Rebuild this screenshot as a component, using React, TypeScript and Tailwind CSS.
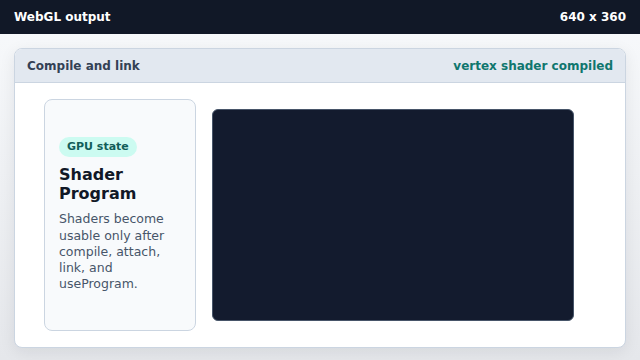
export default function App() {
  return (
    <div className="w-[640px] h-[360px] flex flex-col overflow-hidden bg-gradient-to-b from-[#f8fafc] to-[#e5e7eb] font-['DejaVu_Sans',sans-serif]">
      <div className="h-[34px] shrink-0 bg-[#111827] text-white flex items-center justify-between px-[14px] text-[12px] font-bold">
        <span>WebGL output</span>
        <span>640 x 360</span>
      </div>
      <div className="mx-[14px] mt-[14px] h-[300px] bg-white border border-[#cbd5e1] rounded-[8px] overflow-hidden flex flex-col shadow-[0_4px_16px_rgba(15,23,42,0.08)]">
        <div className="h-[34px] shrink-0 bg-[#e2e8f0] border-b border-[#cbd5e1] flex items-center justify-between px-[12px] text-[12px] font-bold">
          <span className="text-[#334155]">Compile and link</span>
          <span className="text-[#0f766e]">vertex shader compiled</span>
        </div>
        <div className="flex-1 flex items-center pl-[29px] gap-[16px]">
          <div className="w-[152px] h-[232px] bg-[#f8fafc] border border-[#cbd5e1] rounded-[8px] flex flex-col justify-center px-[14px]">
            <span className="self-start bg-[#ccfbf1] text-[#115e59] text-[11px] font-bold rounded-full px-[8px] py-[3px] leading-[14px]">
              GPU state
            </span>
            <h2 className="mt-[8px] text-[16px] leading-[19px] font-bold text-[#111827]">Shader Program</h2>
            <p className="mt-[8px] text-[12.5px] leading-[16.25px] text-[#475569]">
              Shaders become usable only after compile, attach, link, and useProgram.
            </p>
          </div>
          <div className="w-[362px] h-[212px] bg-[#131b2e] border border-[#475569] rounded-[6px]" />
        </div>
      </div>
    </div>
  );
}
